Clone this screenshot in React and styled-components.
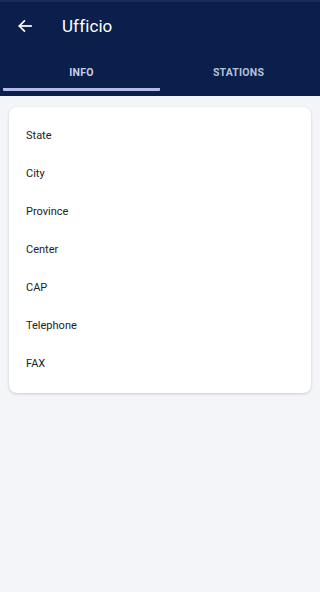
import React, { useState } from 'react'
import styled, { createGlobalStyle } from 'styled-components'

const GlobalStyle = createGlobalStyle`
	html, body {
		margin: 0;
		padding: 0;
		background: #f4f5f9;
		font-family: Roboto, 'Liberation Sans', sans-serif;
	}
`

const fields = ['State', 'City', 'Province', 'Center', 'CAP', 'Telephone', 'FAX']
const tabs = ['INFO', 'STATIONS']

const BackArrow = () => (
	<svg width="16" height="16" viewBox="0 0 24 24" fill="none" stroke="#fff" strokeWidth="2.6" strokeLinecap="square">
		<path d="M21 12H4" />
		<path d="M11 4.5 3.5 12l7.5 7.5" />
	</svg>
)

const App = () => {
	const [active, setActive] = useState(0)

	return (
		<Page>
			<GlobalStyle />
			<Header>
				<TopBar>
					<BackButton aria-label="Back">
						<BackArrow />
					</BackButton>
					<Title>Ufficio</Title>
				</TopBar>
				<Tabs>
					{tabs.map((tab, i) => (
						<Tab key={tab} $active={i === active} onClick={() => setActive(i)}>
							{tab}
						</Tab>
					))}
				</Tabs>
			</Header>
			<Content>
				<Card>
					{fields.map(field => (
						<Field key={field}>{field}</Field>
					))}
				</Card>
			</Content>
		</Page>
	)
}

const Page = styled.div`
	min-height: 592px;
	background: #f4f5f9;
`

const Header = styled.header`
	background: #0a1f4b;
	border-top: 2px solid #1a2c55;
	height: 94px;
	display: flex;
	flex-direction: column;
`

const TopBar = styled.div`
	display: flex;
	align-items: center;
	height: 47px;
	padding-left: 17px;
`

const BackButton = styled.button`
	background: none;
	border: 0;
	padding: 0;
	width: 16px;
	height: 16px;
	display: flex;
	cursor: pointer;
`

const Title = styled.h1`
	margin: 0 0 0 29px;
	font-size: 17px;
	font-weight: 400;
	color: #fff;
	letter-spacing: 0.1px;
`

const Tabs = styled.div`
	display: flex;
	padding: 0 3px;
	flex: 1;
`

const Tab = styled.button`
	flex: 1;
	background: none;
	border: 0;
	border-bottom: 3px solid ${p => (p.$active ? '#b3bbe6' : 'transparent')};
	border-radius: 1px;
	color: ${p => (p.$active ? '#c9cee9' : '#b8bfdb')};
	font-family: Roboto, 'Liberation Sans', sans-serif;
	font-size: 10.5px;
	font-weight: 700;
	letter-spacing: 0.2px;
	padding: 7px 0 0;
	margin-bottom: 5px;
	cursor: pointer;
`

const Content = styled.main`
	padding: 11px 9px;
`

const Card = styled.section`
	background: #fff;
	border-radius: 8px;
	box-shadow: 0 1px 3px rgba(0, 0, 0, 0.18);
	padding: 9px 17px 11px;
	display: flex;
	flex-direction: column;
`

const Field = styled.div`
	height: 38px;
	display: flex;
	align-items: center;
	font-size: 11px;
	color: #222;
`

export default App
